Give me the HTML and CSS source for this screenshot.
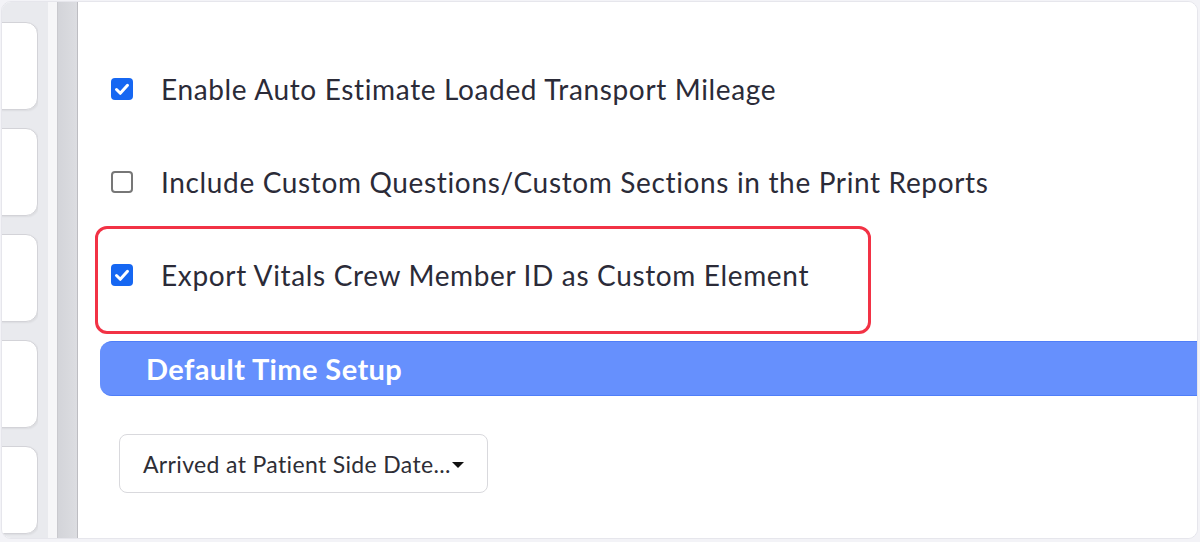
FILE: index.html
```html
<!DOCTYPE html>
<html lang="en">
<head>
    <meta charset="UTF-8">
    <meta name="viewport" content="width=device-width, initial-scale=1.0">
    <title>Agency Settings</title>
    <link rel="stylesheet" href="styles.css">
</head>
<body>
    <div class="frame">
        <aside class="sidebar">
            <div class="cards">
                <div class="card"></div>
                <div class="card"></div>
                <div class="card"></div>
                <div class="card"></div>
                <div class="card"></div>
            </div>
            <div class="gutter"></div>
            <div class="rail"></div>
        </aside>

        <main class="content">
            <label class="option">
                <span class="box checked">
                    <svg viewBox="0 0 22 22" width="22" height="22"><path d="M5.5 11.5l3.8 3.8 7.2-8" fill="none" stroke="#fff" stroke-width="3" stroke-linecap="round" stroke-linejoin="round"/></svg>
                </span>
                <span class="option-text">Enable Auto Estimate Loaded Transport Mileage</span>
            </label>

            <label class="option">
                <span class="box"></span>
                <span class="option-text">Include Custom Questions/Custom Sections in the Print Reports</span>
            </label>

            <label class="option">
                <span class="box checked">
                    <svg viewBox="0 0 22 22" width="22" height="22"><path d="M5.5 11.5l3.8 3.8 7.2-8" fill="none" stroke="#fff" stroke-width="3" stroke-linecap="round" stroke-linejoin="round"/></svg>
                </span>
                <span class="option-text">Export Vitals Crew Member ID as Custom Element</span>
            </label>

            <div class="section-bar">Default Time Setup</div>

            <div class="dropdown">
                <span class="dropdown-text">Arrived at Patient Side Date...</span>
                <span class="caret"></span>
            </div>

            <!-- highlight around the third option -->
            <div class="highlight"></div>
        </main>
    </div>
</body>
</html>
```

FILE: styles.css
```css
* {
    box-sizing: border-box;
}

body {
    margin: 0;
    padding: 1px 2px 3px 1px;
    height: 542px;
    background-color: #f3f3f7;
    font-family: Lato, "Open Sans", sans-serif;
    color: #2b2b38;
    overflow: hidden;
}

.frame {
    display: flex;
    height: 100%;
    border: 1px solid #e6e6ec;
    border-radius: 10px;
    background-color: #fdfdfe;
    overflow: hidden;
}

/* left column with the clipped nav cards */
.sidebar {
    display: flex;
    width: 76px;
    flex-shrink: 0;
    background-color: #e9eaee;
}

.cards {
    display: flex;
    flex-direction: column;
    gap: 18px;
    width: 36px;
    padding-top: 20px;
}

.card {
    height: 88px;
    flex-shrink: 0;
    margin-left: -12px;
    background-color: #fff;
    border: 1.5px solid #d3d3d8;
    border-radius: 12px;
    box-shadow: 1px 1px 2px rgba(0, 0, 0, 0.06);
}

.gutter {
    width: 20px;
    border-right: 1px solid #c9c9ce;
    background: linear-gradient(to right, #e9eaee 0, #e9eaee 10px, #f6f6f8 10px);
}

.rail {
    width: 20px;
    background: linear-gradient(to right, #d3d4d9, #dcdde1);
    border-right: 1px solid #bdbdc2;
}

.content {
    position: relative;
    flex: 1;
    padding-top: 40px;
    background-color: #fff;
}

.option {
    display: flex;
    align-items: center;
    gap: 28px;
    height: 93px;
    padding-left: 33px;
}

.box {
    display: flex;
    flex-shrink: 0;
    width: 22px;
    height: 22px;
    border: 2px solid #777;
    border-radius: 4px;
    background-color: #fff;
}

.box.checked {
    border: none;
    background-color: #1667f2;
}

.option-text {
    font-size: 28px;
    letter-spacing: 0.65px;
}

.section-bar {
    margin-top: 20px;
    margin-left: 22px;
    height: 55px;
    padding-left: 46px;
    display: flex;
    align-items: center;
    background-color: #6690fd;
    border-top: 1px solid #4f7ef8;
    border-bottom: 1px solid #4f7ef8;
    border-radius: 12px 0 0 12px;
    color: #fff;
    font-size: 29px;
    font-weight: bold;
    letter-spacing: 0.4px;
}

.dropdown {
    display: flex;
    align-items: center;
    width: 369px;
    height: 59px;
    margin-top: 38px;
    margin-left: 41px;
    padding-left: 23px;
    border: 1px solid #d9d9dd;
    border-radius: 8px;
    background-color: #fff;
}

.dropdown-text {
    font-size: 23px;
    letter-spacing: 0.35px;
    color: #2e2e36;
}

.caret {
    width: 0;
    height: 0;
    margin-left: 1px;
    margin-top: 2px;
    border-left: 6px solid transparent;
    border-right: 6px solid transparent;
    border-top: 6px solid #111;
}

.highlight {
    position: absolute;
    left: 17px;
    top: 224px;
    width: 776px;
    height: 108px;
    border: 3px solid #f23245;
    border-radius: 12px;
    pointer-events: none;
}
```
